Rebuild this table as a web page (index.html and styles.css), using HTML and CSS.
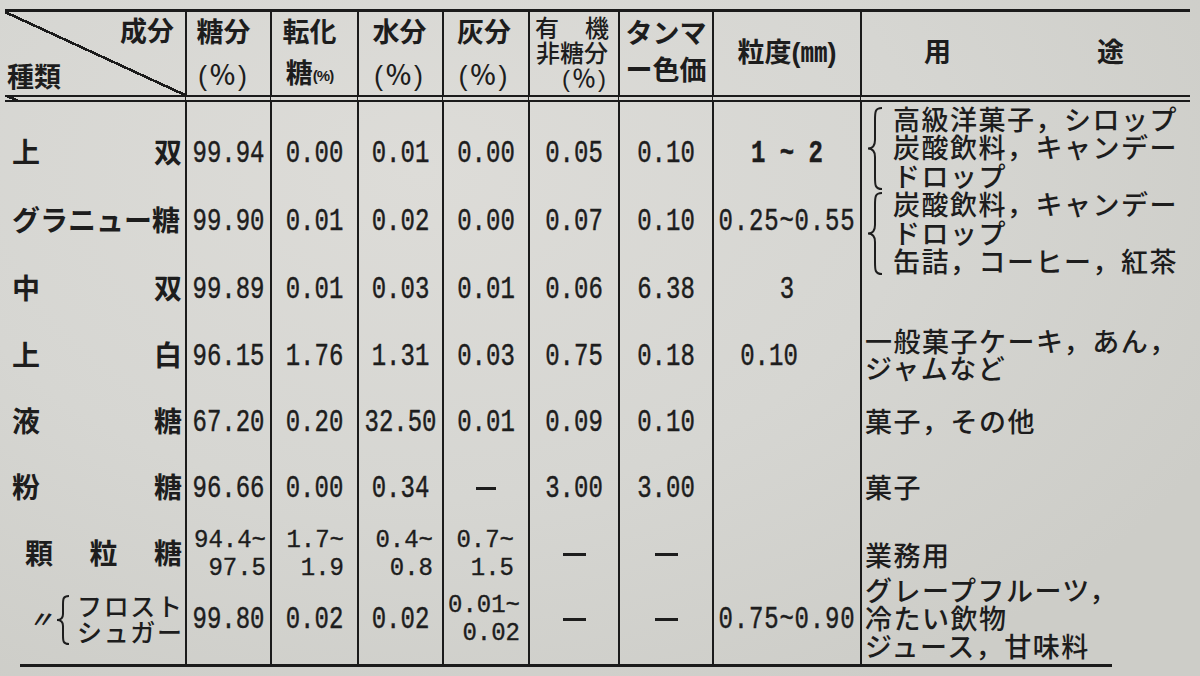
FILE: index.html
```html
<!DOCTYPE html>
<html lang="ja">
<head>
<meta charset="utf-8">
<title>砂糖の種類と成分</title>
<link rel="stylesheet" href="styles.css">
</head>
<body>
<div class="sheet">
<table class="t">
<colgroup>
<col class="w0"><col class="w1"><col class="w2"><col class="w3"><col class="w4"><col class="w5"><col class="w6"><col class="w7"><col class="w8">
</colgroup>
<thead>
<tr>
<th class="h0"><div class="hc corner"><span class="seibun">成分</span><span class="shurui">種類</span></div></th>
<th><div class="hc two p1"><span>糖分</span><span class="pct">(％)</span></div></th>
<th><div class="hc two p2"><span>転化</span><span>糖<small class="sp">(%)</small></span></div></th>
<th><div class="hc two p3"><span>水分</span><span class="pct">(％)</span></div></th>
<th><div class="hc two p4"><span>灰分</span><span class="pct">(％)</span></div></th>
<th><div class="hc three"><span class="spread"><span>有</span><span>機</span></span><span class="c">非糖分</span><span class="r pct">(％)</span></div></th>
<th><div class="hc tanma"><span>タンマ</span><span>ー色価</span></div></th>
<th><div class="hc one"><span>粒度(㎜)</span></div></th>
<th><div class="hc one yoto"><span>用</span><span>途</span></div></th>
</tr>
</thead>
<tbody>
<tr class="r1">
<td class="kind"><div class="jf"><span>上</span><span>双</span></div></td>
<td class="num"><span class="v">99.94</span></td>
<td class="num"><span class="v">0.00</span></td>
<td class="num"><span class="v">0.01</span></td>
<td class="num"><span class="v">0.00</span></td>
<td class="num"><span class="v">0.05</span></td>
<td class="num"><span class="v">0.10</span></td>
<td class="num"><span class="v bold">1 ~ 2</span></td>
<td class="use top" rowspan="3">
<div class="grp">
<svg class="brace" width="28" height="85" viewBox="0 0 28 85"><path d="M17 2 C10 2 10 6 10 14 L10 34 C10 40 7 42.5 3 42.5 C7 42.5 10 45 10 51 L10 71 C10 79 10 83 17 83" fill="none" stroke="#1d1d1d" stroke-width="2"/></svg>
<div class="lines"><div>高級洋菓子，シロップ</div><div>炭酸飲料，キャンデー</div><div>ドロップ</div></div>
</div>
<div class="grp">
<svg class="brace" width="28" height="85" viewBox="0 0 28 85"><path d="M17 2 C10 2 10 6 10 14 L10 34 C10 40 7 42.5 3 42.5 C7 42.5 10 45 10 51 L10 71 C10 79 10 83 17 83" fill="none" stroke="#1d1d1d" stroke-width="2"/></svg>
<div class="lines"><div>炭酸飲料，キャンデー</div><div>ドロップ</div><div>缶詰，コーヒー，紅茶</div></div>
</div>
</td>
</tr>
<tr class="r2">
<td class="kind"><div class="jf"><span>グラニュー糖</span></div></td>
<td class="num"><span class="v">99.90</span></td>
<td class="num"><span class="v">0.01</span></td>
<td class="num"><span class="v">0.02</span></td>
<td class="num"><span class="v">0.00</span></td>
<td class="num"><span class="v">0.07</span></td>
<td class="num"><span class="v">0.10</span></td>
<td class="num"><span class="v wide">0.25~0.55</span></td>
</tr>
<tr class="r3">
<td class="kind"><div class="jf"><span>中</span><span>双</span></div></td>
<td class="num"><span class="v">99.89</span></td>
<td class="num"><span class="v">0.01</span></td>
<td class="num"><span class="v">0.03</span></td>
<td class="num"><span class="v">0.01</span></td>
<td class="num"><span class="v">0.06</span></td>
<td class="num"><span class="v">6.38</span></td>
<td class="num"><span class="v">3</span></td>
</tr>
<tr class="r4">
<td class="kind"><div class="jf"><span>上</span><span>白</span></div></td>
<td class="num"><span class="v">96.15</span></td>
<td class="num"><span class="v">1.76</span></td>
<td class="num"><span class="v">1.31</span></td>
<td class="num"><span class="v">0.03</span></td>
<td class="num"><span class="v">0.75</span></td>
<td class="num"><span class="v">0.18</span></td>
<td class="num shift"><span class="v">0.10</span></td>
<td class="use mid2"><div>一般菓子ケーキ，あん，</div><div>ジャムなど</div></td>
</tr>
<tr class="r5">
<td class="kind"><div class="jf"><span>液</span><span>糖</span></div></td>
<td class="num"><span class="v">67.20</span></td>
<td class="num"><span class="v">0.20</span></td>
<td class="num"><span class="v">32.50</span></td>
<td class="num"><span class="v">0.01</span></td>
<td class="num"><span class="v">0.09</span></td>
<td class="num"><span class="v">0.10</span></td>
<td class="num"></td>
<td class="use mid"><div>菓子，その他</div></td>
</tr>
<tr class="r6">
<td class="kind"><div class="jf"><span>粉</span><span>糖</span></div></td>
<td class="num"><span class="v">96.66</span></td>
<td class="num"><span class="v">0.00</span></td>
<td class="num"><span class="v">0.34</span></td>
<td class="num"><span class="dash short"></span></td>
<td class="num"><span class="v">3.00</span></td>
<td class="num"><span class="v">3.00</span></td>
<td class="num"></td>
<td class="use mid"><div>菓子</div></td>
</tr>
<tr class="r7">
<td class="kind k3"><div class="jf"><span>顆</span><span>粒</span><span>糖</span></div></td>
<td class="num rt pr1"><span class="v2">94.4~</span><span class="v2">97.5</span></td>
<td class="num rt pr2"><span class="v2">1.7~</span><span class="v2">1.9</span></td>
<td class="num rt pr3"><span class="v2">0.4~</span><span class="v2">0.8</span></td>
<td class="num rt pr4"><span class="v2">0.7~</span><span class="v2">1.5</span></td>
<td class="num"><span class="dash"></span></td>
<td class="num"><span class="dash"></span></td>
<td class="num"></td>
<td class="use bot" rowspan="2"><div class="gyomu">業務用</div><div>グレープフルーツ，</div><div>冷たい飲物</div><div>ジュース，甘味料</div></td>
</tr>
<tr class="r8">
<td class="kind k8"><div class="frost"><span class="ditto">〃</span><svg class="brace2" width="24" height="52" viewBox="0 0 24 52"><path d="M16 2 C10 2 10 5 10 11 L10 20 C10 24 8 26 4 26 C8 26 10 28 10 32 L10 41 C10 47 10 50 16 50" fill="none" stroke="#1d1d1d" stroke-width="2"/></svg><div class="fl"><div class="jf"><span>フ</span><span>ロ</span><span>ス</span><span>ト</span></div><div class="jf"><span>シ</span><span>ュ</span><span>ガ</span><span>ー</span></div></div></div></td>
<td class="num"><span class="v">99.80</span></td>
<td class="num"><span class="v">0.02</span></td>
<td class="num"><span class="v">0.02</span></td>
<td class="num rt pr5"><span class="v2">0.01~</span><span class="v2">0.02</span></td>
<td class="num"><span class="dash"></span></td>
<td class="num"><span class="dash"></span></td>
<td class="num"><span class="v wide">0.75~0.90</span></td>
</tr>
</tbody>
</table>
<div class="rule"></div>
</div>
</body>
</html>
```
FILE: styles.css
```css
html, body {
  margin: 0;
  padding: 0;
}

body {
  width: 1200px;
  height: 676px;
  overflow: hidden;
  background: radial-gradient(ellipse 900px 600px at 35% 25%, #dddcd8 0%, #d6d6d2 55%, #cdcdc8 100%);
  color: #1d1d1d;
  font-family: "Liberation Sans", "Noto Sans CJK JP", sans-serif;
}

.sheet {
  padding: 9px 0 0 5px;
}

.t {
  border-collapse: separate;
  border-spacing: 0;
  table-layout: fixed;
  width: 1185px;
}

.w0 { width: 180px; }
.w1 { width: 85px; }
.w2 { width: 87px; }
.w3 { width: 85px; }
.w4 { width: 86px; }
.w5 { width: 90px; }
.w6 { width: 94px; }
.w7 { width: 148px; }
.w8 { width: 330px; }

th {
  padding: 0;
  border-top: 3px solid #1b1b1b;
  border-bottom: 7px double #1b1b1b;
  font-weight: 700;
  font-size: 27px;
  vertical-align: top;
}

th + th,
td + td {
  border-left: 2px solid #1b1b1b;
}

.hc {
  height: 83px;
  box-sizing: border-box;
  display: flex;
  flex-direction: column;
  line-height: 27px;
  white-space: nowrap;
}

.h0 {
  background: linear-gradient(to top right, transparent calc(50% - 1.3px), #1b1b1b calc(50% - 1.3px), #1b1b1b calc(50% + 1.3px), transparent calc(50% + 1.3px));
}

.corner {
  justify-content: space-between;
  padding: 7px 11px 3px 2px;
}

.seibun { align-self: flex-end; }
.shurui { align-self: flex-start; }

.two {
  justify-content: space-between;
  align-items: center;
  padding: 7px 0 5px;
  line-height: 28px;
}

.p1 { padding-right: 10px; }
.p2 { padding-right: 10px; }
.p3 { padding-right: 2px; }
.p4 { padding-right: 4px; }

.pct {
  font-weight: 500;
  letter-spacing: 2px;
}

.sp {
  font-size: 15px;
  letter-spacing: -1px;
  vertical-align: 2px;
}

.three {
  justify-content: space-between;
  padding: 4px 9px 5px 5px;
  font-size: 24px;
  line-height: 25px;
  font-weight: 500;
}

.three .spread {
  display: flex;
  justify-content: space-between;
}

.three .c { text-align: center; }
.three .r { text-align: right; padding-right: 1px; }

.tanma {
  justify-content: space-between;
  align-items: center;
  padding: 9px 0 10px;
}

.one {
  justify-content: center;
  align-items: center;
}

.yoto {
  flex-direction: row;
  justify-content: space-between;
  align-items: center;
  padding: 0 66px 0 62px;
}

td {
  padding: 0;
  vertical-align: middle;
}

.r1 { height: 86px; }
.r2 { height: 68px; }
.r3 { height: 67px; }
.r4 { height: 67px; }
.r5 { height: 65px; }
.r6 { height: 67px; }
.r7 { height: 66px; }
.r8 { height: 76px; }

.r1 td:not(.use) { padding-top: 18px; }
.r8 td { padding-bottom: 12px; }

.kind {
  padding: 0 3px 0 7px;
  font-size: 28px;
  font-weight: 700;
  line-height: 28px;
  white-space: nowrap;
}

.jf {
  display: flex;
  justify-content: space-between;
}

.k3 { padding-left: 20px; }

.k8 {
  padding-left: 24px;
  padding-right: 0;
}

.frost {
  display: flex;
  align-items: center;
}

.ditto {
  font-size: 24px;
  font-weight: 700;
  font-style: italic;
  width: 24px;
}

.brace2 { flex: none; }

.fl {
  width: 105px;
  font-size: 25px;
  line-height: 26px;
  font-weight: 500;
}

.num {
  font-family: "Liberation Mono", "DejaVu Sans Mono", monospace;
  font-size: 24px;
  line-height: 28px;
  text-align: center;
  white-space: nowrap;
}

.v {
  display: inline-block;
  transform: scaleY(1.27);
  -webkit-text-stroke: 0.35px #1d1d1d;
}

.v2 {
  display: block;
  transform: scaleY(1.05);
  -webkit-text-stroke: 0.35px #1d1d1d;
}

.bold { font-weight: 700; }

.wide { letter-spacing: 0.8px; }

.shift { padding-right: 36px; }

.rt { text-align: right; }
.pr1 { padding-right: 4px; }
.pr2 { padding-right: 13px; }
.pr3 { padding-right: 9px; }
.pr4 { padding-right: 14px; }
.pr5 { padding-right: 8px; }

.dash {
  display: inline-block;
  width: 23px;
  height: 3px;
  background: #1d1d1d;
  vertical-align: middle;
}

.dash.short { width: 20px; }

.use {
  padding-left: 3px;
  font-size: 27px;
  font-weight: 500;
  letter-spacing: 1.5px;
  white-space: nowrap;
}

.use.top {
  vertical-align: top;
  padding-top: 5px;
  line-height: 28.4px;
}

.grp {
  display: flex;
}

.brace {
  flex: none;
  margin-top: -1px;
}

.use.mid { line-height: 28px; }
.use.mid2 { line-height: 27px; }

.use.bot {
  vertical-align: bottom;
  padding-bottom: 2px;
  line-height: 28px;
}

.gyomu {
  margin-bottom: 7px;
}

.rule {
  margin-left: 15px;
  width: 1092px;
  height: 3px;
  background: #1b1b1b;
}
```
